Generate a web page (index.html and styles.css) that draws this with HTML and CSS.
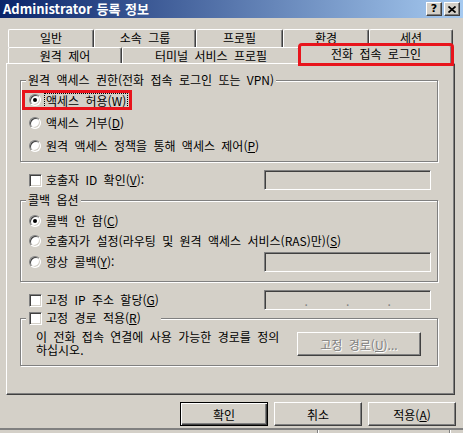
FILE: index.html
```html
<!DOCTYPE html>
<html lang="ko">
<head>
<meta charset="utf-8">
<title>Administrator 등록 정보</title>
<link rel="stylesheet" href="styles.css">
</head>
<body>
<div class="window">
  <div class="titlebar">
    <span class="title">Administrator 등록 정보</span>
    <div class="caption-btns">
      <span class="cap-btn help">?</span>
      <span class="cap-btn close"><svg width="8" height="7" viewBox="0 0 8 7"><path d="M0.5 0.5 L7.5 6.5 M7.5 0.5 L0.5 6.5" stroke="#000" stroke-width="1.7" fill="none"/></svg></span>
    </div>
  </div>

  <div class="tabs">
    <div class="tabrow row1">
      <div class="tab w86">일반</div>
      <div class="tab w102">소속 그룹</div>
      <div class="tab w87">프로필</div>
      <div class="tab w86">환경</div>
      <div class="tab w84">세션</div>
    </div>
    <div class="tabrow row2">
      <div class="tab w114">원격 제어</div>
      <div class="tab w178">터미널 서비스 프로필</div>
      <div class="tab active">전화 접속 로그인</div>
    </div>
  </div>

  <div class="panel">
    <div class="group g1">
      <div class="legend">원격 액세스 권한(전화 접속 로그인 또는 VPN)</div>
      <div class="rows rows1">
        <div class="row"><span class="item flagged"><span class="radio on"></span><span class="focus">액세스 허용(<u>W</u>)</span></span></div>
        <div class="row"><span class="item"><span class="radio"></span><span class="lbl">액세스 거부(<u>D</u>)</span></span></div>
        <div class="row"><span class="item"><span class="radio"></span><span class="lbl">원격 액세스 정책을 통해 액세스 제어(<u>P</u>)</span></span></div>
      </div>
    </div>

    <div class="line line-caller">
      <span class="item"><span class="check"></span><span class="lbl">호출자 ID 확인(<u>V</u>):</span></span>
      <span class="field"></span>
    </div>

    <div class="group g2">
      <div class="legend">콜백 옵션</div>
      <div class="rows rows2">
        <div class="row"><span class="item"><span class="radio on"></span><span class="lbl">콜백 안 함(<u>C</u>)</span></span></div>
        <div class="row"><span class="item"><span class="radio"></span><span class="lbl">호출자가 설정(라우팅 및 원격 액세스 서비스(RAS)만)(<u>S</u>)</span></span></div>
        <div class="row row-last"><span class="item"><span class="radio"></span><span class="lbl">항상 콜백(<u>Y</u>):</span></span><span class="field"></span></div>
      </div>
    </div>

    <div class="line line-ip">
      <span class="item"><span class="check"></span><span class="lbl">고정 IP 주소 할당(<u>G</u>)</span></span>
      <span class="field ip"><span class="seg"></span><span class="dot">.</span><span class="seg"></span><span class="dot">.</span><span class="seg"></span><span class="dot">.</span><span class="seg"></span></span>
    </div>

    <div class="group g3">
      <div class="legend legend-check"><span class="check"></span><span class="lbl">고정 경로 적용(<u>R</u>)</span></div>
      <div class="static">
        <div class="desc">이 전화 접속 연결에 사용 가능한 경로를 정의<br>하십시오.</div>
        <button type="button" class="btn routes" disabled>고정 경로(<u>U</u>)...</button>
      </div>
    </div>
  </div>

  <div class="actions">
    <button type="button" class="btn default">확인</button>
    <button type="button" class="btn">취소</button>
    <button type="button" class="btn">적용(<u>A</u>)</button>
  </div>

  <div class="strip">
    <span class="cell c1"></span>
    <span class="cell c2"></span>
  </div>
</div>
</body>
</html>
```

FILE: styles.css
```css
html, body {
  margin: 0;
  padding: 0;
}
body {
  background: #D4D0C8;
  font-family: "Noto Sans CJK KR", "Noto Sans", sans-serif;
  font-size: 12px;
  color: #000;
  width: 463px;
  height: 433px;
  overflow: hidden;
  word-spacing: 3px;
}
.window {
  width: 463px;
}

/* title bar */
.titlebar {
  height: 18px;
  display: flex;
  align-items: center;
  padding-left: 3px;
  background: linear-gradient(to right, #0A246A, #A6CAF0);
}
.title {
  color: #fff;
  font-weight: bold;
  font-size: 13px;
  line-height: 18px;
  white-space: nowrap;
  word-spacing: 1px;
}
.caption-btns {
  margin-left: auto;
  margin-right: 3px;
  display: flex;
  gap: 2px;
}
.cap-btn {
  box-sizing: border-box;
  width: 16px;
  height: 14px;
  background: #D4D0C8;
  border: 1px solid;
  border-color: #fff #404040 #404040 #fff;
  box-shadow: inset -1px -1px 0 #808080;
  display: flex;
  align-items: center;
  justify-content: center;
  font-family: "DejaVu Sans", sans-serif;
  font-weight: bold;
  font-size: 11px;
  line-height: 12px;
}

/* tabs */
.tabs {
  margin-top: 11px;
}
.tabrow {
  display: flex;
  margin-left: 8px;
}
.row1 { height: 18px; }
.row2 { height: 16px; align-items: flex-start; }
.tab {
  box-sizing: border-box;
  height: 100%;
  border-top: 1px solid #fff;
  border-left: 1px solid #fff;
  border-right: 1px solid #404040;
  box-shadow: inset -1px 0 0 #808080;
  border-radius: 2px 2px 0 0;
  text-align: center;
  line-height: 16px;
  white-space: nowrap;
}
.row2 .tab { line-height: 15px; }
.w84 { width: 84px; }
.w86 { width: 86px; }
.w87 { width: 87px; }
.w102 { width: 102px; }
.w114 { width: 114px; }
.w178 { width: 178px; }
.tab.active {
  width: 152px;
  height: 19px;
  margin-top: -2px;
  position: relative;
  z-index: 1;
  background: #D4D0C8;
  line-height: 15px;
  outline: 3px solid #E8141C;
  outline-offset: -1px;
}

/* panel */
.panel {
  box-sizing: border-box;
  margin-left: 6px;
  width: 449px;
  height: 332px;
  border: 1px solid;
  border-color: #fff #404040 #404040 #fff;
  box-shadow: inset -1px -1px 0 #808080;
  padding: 16px 16px 0 13px;
}

/* group boxes */
.group {
  border: 1px solid #808080;
  box-shadow: 1px 1px 0 #fff, inset 1px 1px 0 #fff;
  padding: 0 6px 5px 4px;
}
.legend {
  width: fit-content;
  height: 14px;
  line-height: 14px;
  margin: -8px 0 0 1px;
  padding: 0 2px;
  background: #D4D0C8;
  display: flex;
  align-items: center;
  white-space: nowrap;
}
.legend-check {
  padding: 0 20px 0 3px;
}
.rows {
  display: flex;
  flex-direction: column;
}
.rows1 {
  gap: 3px;
  margin-top: 3px;
}
.rows2 {
  margin-top: 4px;
}
.g2 {
  margin-top: 10px;
  padding-bottom: 9px;
}
.row {
  height: 20px;
  display: flex;
  align-items: center;
}
.row-last {
  margin-top: 1px;
}
.item {
  display: flex;
  align-items: center;
  height: 14px;
  padding-left: 4px;
  white-space: nowrap;
}
.item.flagged {
  outline: 3px solid #E8141C;
  padding-right: 2px;
}
.focus {
  outline: 1px dotted #000;
  padding: 0 1px;
  margin-left: -1px;
  line-height: 13px;
}
.lbl {
  line-height: 14px;
}

.radio {
  box-sizing: border-box;
  flex: none;
  width: 12px;
  height: 12px;
  border-radius: 50%;
  border: 1px solid;
  border-color: #808080 #fff #fff #808080;
  box-shadow: inset 1px 1px 0 #404040, inset -1px -1px 0 #D4D0C8;
  background: #fff;
  margin-right: 5px;
  display: flex;
  align-items: center;
  justify-content: center;
}
.radio.on::after {
  content: "";
  width: 4px;
  height: 4px;
  border-radius: 50%;
  background: #000;
}
.check {
  box-sizing: border-box;
  flex: none;
  width: 13px;
  height: 13px;
  border: 1px solid;
  border-color: #808080 #fff #fff #808080;
  box-shadow: inset 1px 1px 0 #404040, inset -1px -1px 0 #D4D0C8;
  background: #fff;
  margin-right: 4px;
}

/* single rows outside groups */
.line {
  display: flex;
  align-items: center;
  height: 20px;
  padding-left: 5px;
  padding-right: 7px;
}
.line-caller {
  margin-top: 8px;
}
.line-ip {
  margin-top: 8px;
}
.field {
  box-sizing: border-box;
  flex: none;
  width: 167px;
  height: 20px;
  margin-left: auto;
  border: 1px solid;
  border-color: #808080 #fff #fff #808080;
  box-shadow: inset 1px 1px 0 #404040, inset -1px -1px 0 #D4D0C8;
  background: #D4D0C8;
}
.field.ip {
  display: flex;
  align-items: center;
  padding: 0 1px;
}
.seg {
  flex: 1;
}
.dot {
  color: #808080;
  line-height: 16px;
  width: 3px;
  text-align: center;
  padding-top: 2px;
}

.g3 {
  margin-top: 8px;
  padding-bottom: 9px;
}
.static {
  display: flex;
  align-items: flex-start;
  height: 24px;
  margin-top: 7px;
}
.desc {
  margin-left: 11px;
  margin-top: -2px;
  line-height: 13px;
  white-space: nowrap;
}

/* push buttons */
.btn {
  appearance: none;
  -webkit-appearance: none;
  box-sizing: border-box;
  margin: 0;
  padding: 0;
  width: 88px;
  height: 24px;
  font: inherit;
  color: #000;
  background: #D4D0C8;
  border: 1px solid;
  border-color: #fff #404040 #404040 #fff;
  box-shadow: inset -1px -1px 0 #808080;
  display: flex;
  align-items: center;
  justify-content: center;
  white-space: nowrap;
  word-spacing: 3px;
}
.btn.default {
  border: 1px solid #000;
  box-shadow: inset 1px 1px 0 #fff, inset -1px -1px 0 #404040, inset -2px -2px 0 #808080;
}
.btn:disabled {
  color: #808080;
  text-shadow: 1px 1px 0 #fff;
}
.btn.routes {
  width: 124px;
  margin-left: auto;
  margin-right: 10px;
}
.actions {
  display: flex;
  justify-content: flex-end;
  gap: 6px;
  margin-top: 7px;
  padding-right: 7px;
}

/* strip below */
.strip {
  display: flex;
  height: 5px;
  margin-top: 2px;
  border-top: 2px solid #808080;
}
.cell {
  display: block;
  height: 100%;
  border-right: 1px solid #808080;
  box-shadow: 1px 0 0 #fff;
}
.c1 { width: 317px; }
.c2 { width: 131px; }
```
